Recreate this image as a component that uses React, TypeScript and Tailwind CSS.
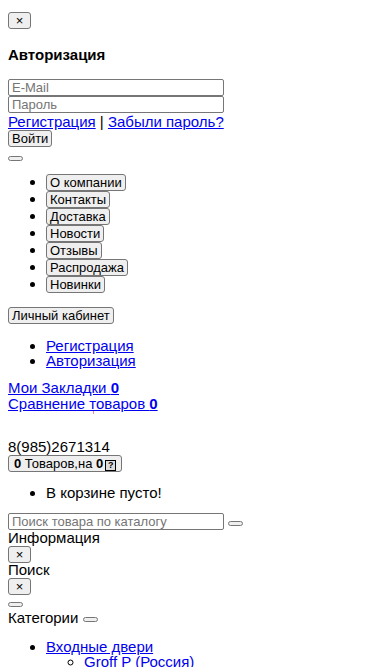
const btn =
  "inline-block bg-[#efefef] border border-[#767676] rounded-[3px] text-[13px] leading-[15px] px-[3px] text-black font-['Liberation_Sans',Arial,sans-serif]";
const tiny = "inline-block bg-[#efefef] border border-[#767676] rounded-[3px] w-[15px] h-[5px] align-middle";
const link = "text-[#0000ee] underline";
const input =
  "block w-[216px] h-[17px] border border-[#767676] rounded-[2px] px-[3px] text-[13px] leading-[15px] placeholder:text-[#757575] bg-white";
const close = btn + " w-[23px] h-[17px] text-[10px] px-0";

const menu = ["О компании", "Контакты", "Доставка", "Новости", "Отзывы", "Распродажа", "Новинки"];

const App = () => {
  return (
    <div className="min-h-[667px] bg-white text-black px-2 pt-3 text-[15px] leading-[16px] font-['Liberation_Sans',Arial,sans-serif] overflow-hidden">
      <button className={close}>×</button>
      <h4 className="font-bold text-[15px] mt-[18px] mb-[16px]">Авторизация</h4>
      <input className={input} placeholder="E-Mail" />
      <input className={input} placeholder="Пароль" />
      <div className="leading-[17px]">
        <a className={link} href="#">Регистрация</a> | <a className={link} href="#">Забыли пароль?</a>
      </div>
      <button className={btn + " h-[17px]"}>Войти</button>
      <div className="mt-[9px] leading-[0]">
        <button className={tiny}></button>
      </div>
      <ul className="list-disc pl-[38px] mt-[13px]">
        {menu.map((m) => (
          <li key={m} className="h-[17px]">
            <button className={btn + " h-[17px]"}>{m}</button>
          </li>
        ))}
      </ul>
      <button className={btn + " h-[17px] mt-[14px]"}>Личный кабинет</button>
      <ul className="list-disc pl-[38px] mt-[14px]">
        <li className="leading-[15px]"><a className={link} href="#">Регистрация</a></li>
        <li className="leading-[15px]"><a className={link} href="#">Авторизация</a></li>
      </ul>
      <div className="mt-[12px]">
        <a className={link} href="#">Мои Закладки <b>0</b></a>
      </div>
      <div>
        <a className={link} href="#">Сравнение товаров <b>0</b></a>
      </div>
      <div className="h-0 pl-[85px]">
        <span className="block w-[1px] h-[3px] mt-[-1px] bg-[#f08a9a]"></span>
      </div>
      <div className="mt-[28px]">8(985)2671314</div>
      <button className={btn + " h-[17px] flex items-center gap-[3px] px-[5px]"}>
        <b>0</b> Товаров,на <b>0</b>
        <span className="inline-flex items-center justify-center w-[11px] h-[11px] ml-[2px] border border-black text-[9px] font-bold leading-none bg-[#ddd]">?</span>
      </button>
      <ul className="list-disc pl-[38px] mt-[12px]">
        <li className="leading-[17px]">В корзине пусто!</li>
      </ul>
      <div className="flex items-center gap-[4px] mt-[12px]">
        <input className={input} placeholder="Поиск товара по каталогу" />
        <button className={tiny + " mt-[3px]"}></button>
      </div>
      <div>Информация</div>
      <button className={close}>×</button>
      <div className="mt-[-1px]">Поиск</div>
      <button className={close}>×</button>
      <div className="mt-[7px] leading-[0]">
        <button className={tiny}></button>
      </div>
      <div className="mt-[3px]">
        Категории <button className={tiny}></button>
      </div>
      <ul className="list-disc pl-[38px] mt-[13px]">
        <li className="leading-[15px]">
          <a className={link} href="#">Входные двери</a>
          <ul className="list-[circle] pl-[38px]">
            <li className="leading-[15px]"><a className={link} href="#">Groff P (Россия)</a></li>
          </ul>
        </li>
      </ul>
    </div>
  );
};

export default App;
